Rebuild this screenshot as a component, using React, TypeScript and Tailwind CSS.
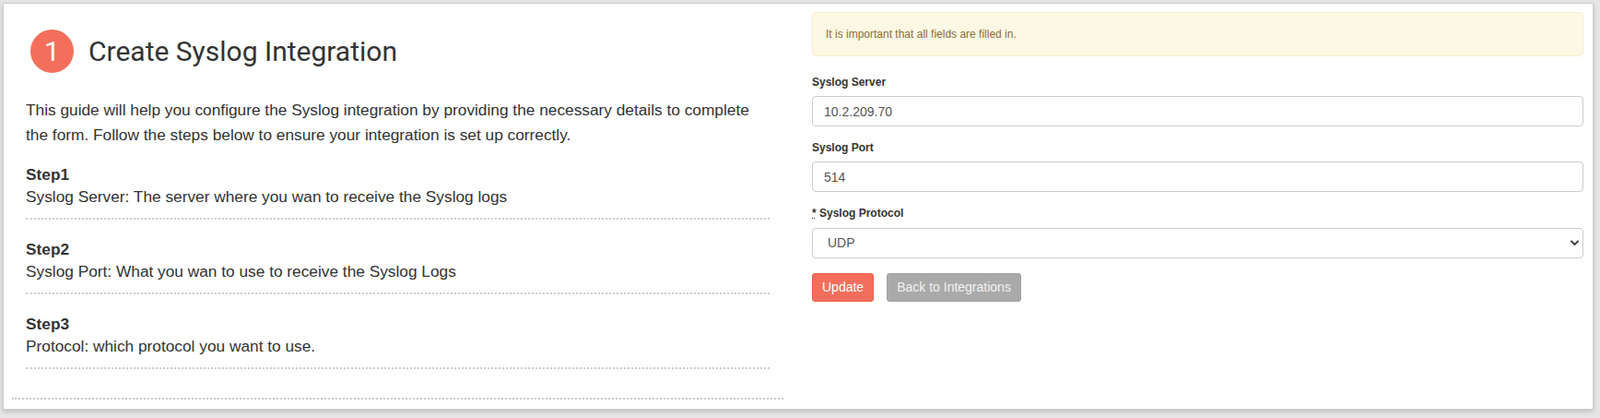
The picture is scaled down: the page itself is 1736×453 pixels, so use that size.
import React from "react";

const sans = { fontFamily: '"Liberation Sans", Arial, sans-serif' };

function Step({ title, text }: { title: string; text: string }) {
  return (
    <div className="border-b-2 border-dotted border-[#cccccc] pb-[11px] mb-[20px] last:mb-0">
      <div className="font-bold text-[17.3px] leading-[24px] text-[#333333]">{title}</div>
      <div className="text-[17.3px] leading-[24px] text-[#333333]">{text}</div>
    </div>
  );
}

export default function App() {
  return (
    <div className="w-[1736px] h-[453px] bg-[#e6e6e6] pt-[3px] pl-[3px] overflow-hidden" style={sans}>
      <div className="w-[1726px] bg-white border border-[#cfcfcf] shadow-[0_2px_5px_rgba(0,0,0,0.18)] pt-[9px] pl-[9px] pr-[10px] pb-[10px] flex gap-[31px] items-start">
        {/* Left column */}
        <div className="w-[837px] border-b-2 border-dotted border-[#cccccc]">
          <div className="px-[15px] pb-[31px]">
            <div className="mt-[19px] ml-[5px] flex items-center gap-[16px]">
              <div
                className="w-[47px] h-[47px] rounded-full bg-[#f36f5c] text-white flex items-center justify-center text-[30px] leading-none"
                style={{ fontFamily: 'Roboto, "Liberation Sans", sans-serif' }}
              >
                1
              </div>
              <h1
                className="text-[30px] leading-[36px] text-[#333333] font-normal"
                style={{ fontFamily: 'Roboto, "Liberation Sans", sans-serif' }}
              >
                Create Syslog Integration
              </h1>
            </div>
            <p className="mt-[27px] text-[17.3px] leading-[26.5px] text-[#333333]">
              This guide will help you configure the Syslog integration by providing the necessary details to complete
              the form. Follow the steps below to ensure your integration is set up correctly.
            </p>
            <div className="mt-[18px]">
              <Step title="Step1" text="Syslog Server: The server where you wan to receive the Syslog logs" />
              <Step title="Step2" text="Syslog Port: What you wan to use to receive the Syslog Logs" />
              <Step title="Step3" text="Protocol: which protocol you want to use." />
            </div>
          </div>
        </div>

        {/* Right column */}
        <div className="flex-1">
          <div className="h-[48px] flex items-center px-[14px] bg-[#fcf8e3] border border-[#faebcc] rounded-[4px] text-[12px] text-[#8a6d3b]">
            It is important that all fields are filled in.
          </div>

          <div className="mt-[20px]">
            <label className="block font-bold text-[12px] leading-[17px] text-[#333333] mb-[6px]">Syslog Server</label>
            <input
              readOnly
              value="10.2.209.70"
              className="block w-full h-[33px] border border-[#cccccc] rounded-[4px] px-[12px] text-[14px] text-[#555555] bg-white outline-none"
              style={sans}
            />
          </div>

          <div className="mt-[15px]">
            <label className="block font-bold text-[12px] leading-[17px] text-[#333333] mb-[6px]">Syslog Port</label>
            <input
              readOnly
              value="514"
              className="block w-full h-[33px] border border-[#cccccc] rounded-[4px] px-[12px] text-[14px] text-[#555555] bg-white outline-none"
              style={sans}
            />
          </div>

          <div className="mt-[15px]">
            <label className="block font-bold text-[12px] leading-[17px] text-[#333333] mb-[7px]">
              <abbr title="required" className="underline decoration-dotted">*</abbr> Syslog Protocol
            </label>
            <div className="relative">
              <select
                defaultValue="UDP"
                className="block w-full h-[33px] appearance-none border border-[#cccccc] rounded-[4px] pl-[16px] pr-[30px] text-[14px] text-[#555555] bg-white outline-none"
                style={sans}
              >
                <option value="UDP">UDP</option>
                <option value="TCP">TCP</option>
              </select>
              <svg
                className="absolute right-[5px] top-[13px] pointer-events-none"
                width="9"
                height="7"
                viewBox="0 0 9 7"
                fill="none"
              >
                <path d="M1 1.5 L4.5 5 L8 1.5" stroke="#444444" strokeWidth="2" strokeLinecap="round" strokeLinejoin="round" />
              </svg>
            </div>
          </div>

          <div className="mt-[16px] flex gap-[14px]">
            <button className="h-[31px] px-[10px] bg-[#f36f5c] border border-[#e8604c] rounded-[3px] text-white text-[14px]" style={sans}>
              Update
            </button>
            <button className="h-[31px] px-[10px] bg-[#aaaaaa] border border-[#a2a2a2] rounded-[3px] text-[#f2f2f2] text-[14px]" style={sans}>
              Back to Integrations
            </button>
          </div>
        </div>
      </div>
    </div>
  );
}
